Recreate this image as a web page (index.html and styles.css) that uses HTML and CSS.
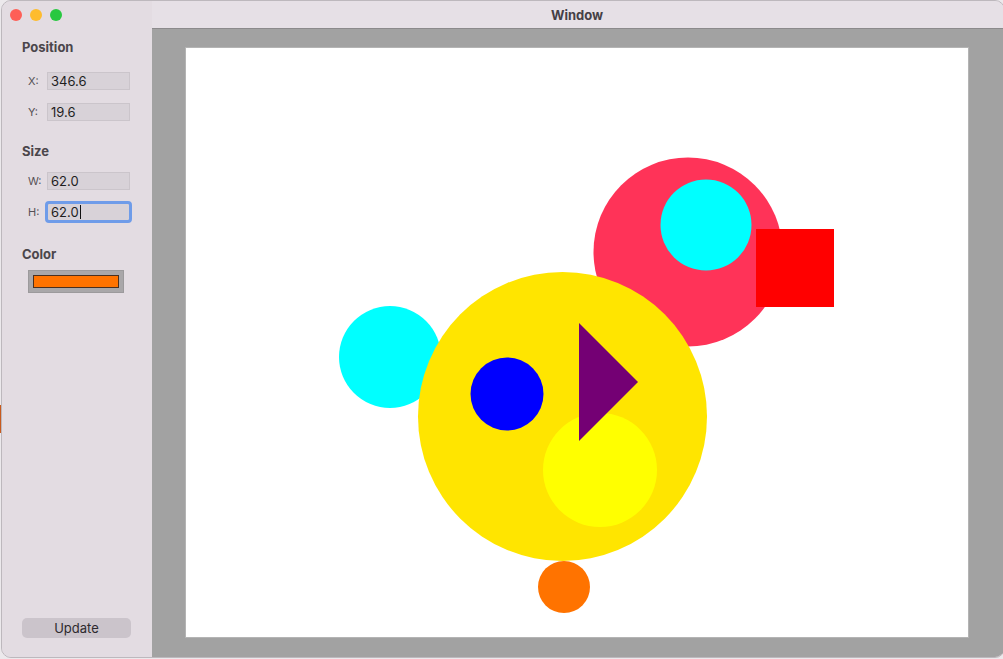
FILE: index.html
```html
<!DOCTYPE html>
<html>
<head>
<meta charset="utf-8">
<link rel="stylesheet" href="styles.css">
</head>
<body>
<div class="desk-strip"></div>
<div class="window">
  <aside class="sidebar">
    <div class="lights">
      <span class="light red"></span>
      <span class="light yellow"></span>
      <span class="light green"></span>
    </div>
    <div class="heading h-pos">Position</div>
    <div class="row r1"><span class="lbl">X:</span><span class="field">346.6</span></div>
    <div class="row r2"><span class="lbl">Y:</span><span class="field">19.6</span></div>
    <div class="heading h-size">Size</div>
    <div class="row r1"><span class="lbl">W:</span><span class="field">62.0</span></div>
    <div class="row r2"><span class="lbl">H:</span><span class="field focus">62.0<span class="caret"></span></span></div>
    <div class="heading h-color">Color</div>
    <div class="well"><div class="swatch"></div></div>
    <button class="update">Update</button>
  </aside>
  <main class="main">
    <div class="titlebar">Window</div>
    <div class="content">
      <svg class="canvas" width="782" height="589" viewBox="0 0 782 589">
        <rect width="782" height="589" fill="#ffffff"/>
        <circle cx="502" cy="204" r="94.5" fill="#ff3358"/>
        <circle cx="520" cy="177" r="45.5" fill="#00ffff"/>
        <rect x="570" y="181" width="78" height="78" fill="#ff0000"/>
        <circle cx="204" cy="309" r="51" fill="#00ffff"/>
        <circle cx="378" cy="539" r="26" fill="#ff7300"/>
        <circle cx="376.5" cy="368.5" r="144.5" fill="#ffe500"/>
        <circle cx="321" cy="346" r="36.5" fill="#0000ff"/>
        <circle cx="414" cy="422" r="57" fill="#ffff00"/>
        <polygon points="393,275 452,334 393,393" fill="#740074"/>
      </svg>
    </div>
  </main>
</div>
</body>
</html>
```

FILE: styles.css
```css
* { box-sizing: border-box; }
html, body {
  margin: 0;
  padding: 0;
  width: 1003px;
  height: 659px;
  overflow: hidden;
  background: #ece9ec;
  font-family: Inter, "Liberation Sans", sans-serif;
}
body { position: relative; }
.desk-strip {
  position: absolute;
  left: 0;
  top: 405px;
  width: 2px;
  height: 28px;
  background: #c85a1e;
}
.window {
  position: relative;
  margin-left: 1px;
  width: 1004px;
  height: 658px;
  display: flex;
  border: 1px solid #bdb8bd;
  border-radius: 10px;
  overflow: hidden;
  background: #e3dce2;
}
.sidebar {
  width: 150px;
  flex: none;
  display: flex;
  flex-direction: column;
  padding: 0 0 19px 20px;
  background: #e3dce2;
}
.lights {
  height: 26px;
  display: flex;
  align-items: center;
  gap: 8px;
  margin-left: -12px;
  padding-top: 1px;
}
.light {
  width: 12px;
  height: 12px;
  border-radius: 50%;
  display: block;
}
.red { background: #fe5f57; }
.yellow { background: #febc2e; }
.green { background: #28c840; }
.heading {
  font-size: 13px;
  font-weight: 700;
  line-height: 16px;
  color: #4b464b;
}
.h-pos { margin-top: 12px; }
.h-size { margin-top: 22px; }
.h-color { margin-top: 25px; }
.row {
  display: flex;
  align-items: center;
  height: 18px;
  padding-left: 6px;
}
.r1 { margin-top: 13px; }
.h-pos + .r1 { margin-top: 17px; }
.r2 { margin-top: 13px; }
.lbl {
  width: 19px;
  font-size: 11px;
  color: #555055;
}
.field {
  position: relative;
  width: 83px;
  height: 18px;
  background: #d8d2d8;
  border: 1px solid #cbc5cb;
  font-size: 13px;
  line-height: 16px;
  padding-left: 3px;
  color: #1e1e1e;
  display: flex;
  align-items: center;
}
.field.focus {
  outline: 3px solid #6f9ce9;
  outline-offset: -1px;
  border-radius: 2px;
}
.caret {
  display: inline-block;
  width: 1px;
  height: 14px;
  background: #111;
  margin-left: 1px;
}
.well {
  margin-top: 8px;
  margin-left: 6px;
  width: 96px;
  height: 23px;
  background: #a9a7a9;
  border: 1px solid #9c9a9c;
  padding: 4px;
}
.swatch {
  width: 100%;
  height: 100%;
  background: #ff7300;
  border: 1px solid #4a3020;
}
.update {
  margin-top: auto;
  width: 109px;
  height: 20px;
  border: none;
  border-radius: 5px;
  background: #cbc4cb;
  font-family: Inter, "Liberation Sans", sans-serif;
  font-size: 13px;
  color: #2e2a2e;
  padding: 0;
}
.main {
  flex: 1;
  display: flex;
  flex-direction: column;
}
.titlebar {
  height: 28px;
  flex: none;
  background: #e6e0e6;
  border-bottom: 1px solid #8c8a8c;
  display: flex;
  align-items: center;
  justify-content: center;
  font-size: 13px;
  font-weight: 700;
  color: #454045;
  padding-right: 2px;
}
.content {
  flex: 1;
  background: #a2a2a2;
  padding: 19px 0 0 34px;
}
.canvas {
  display: block;
  box-shadow: 0 0 0 1px #b4b4b4;
}
```
